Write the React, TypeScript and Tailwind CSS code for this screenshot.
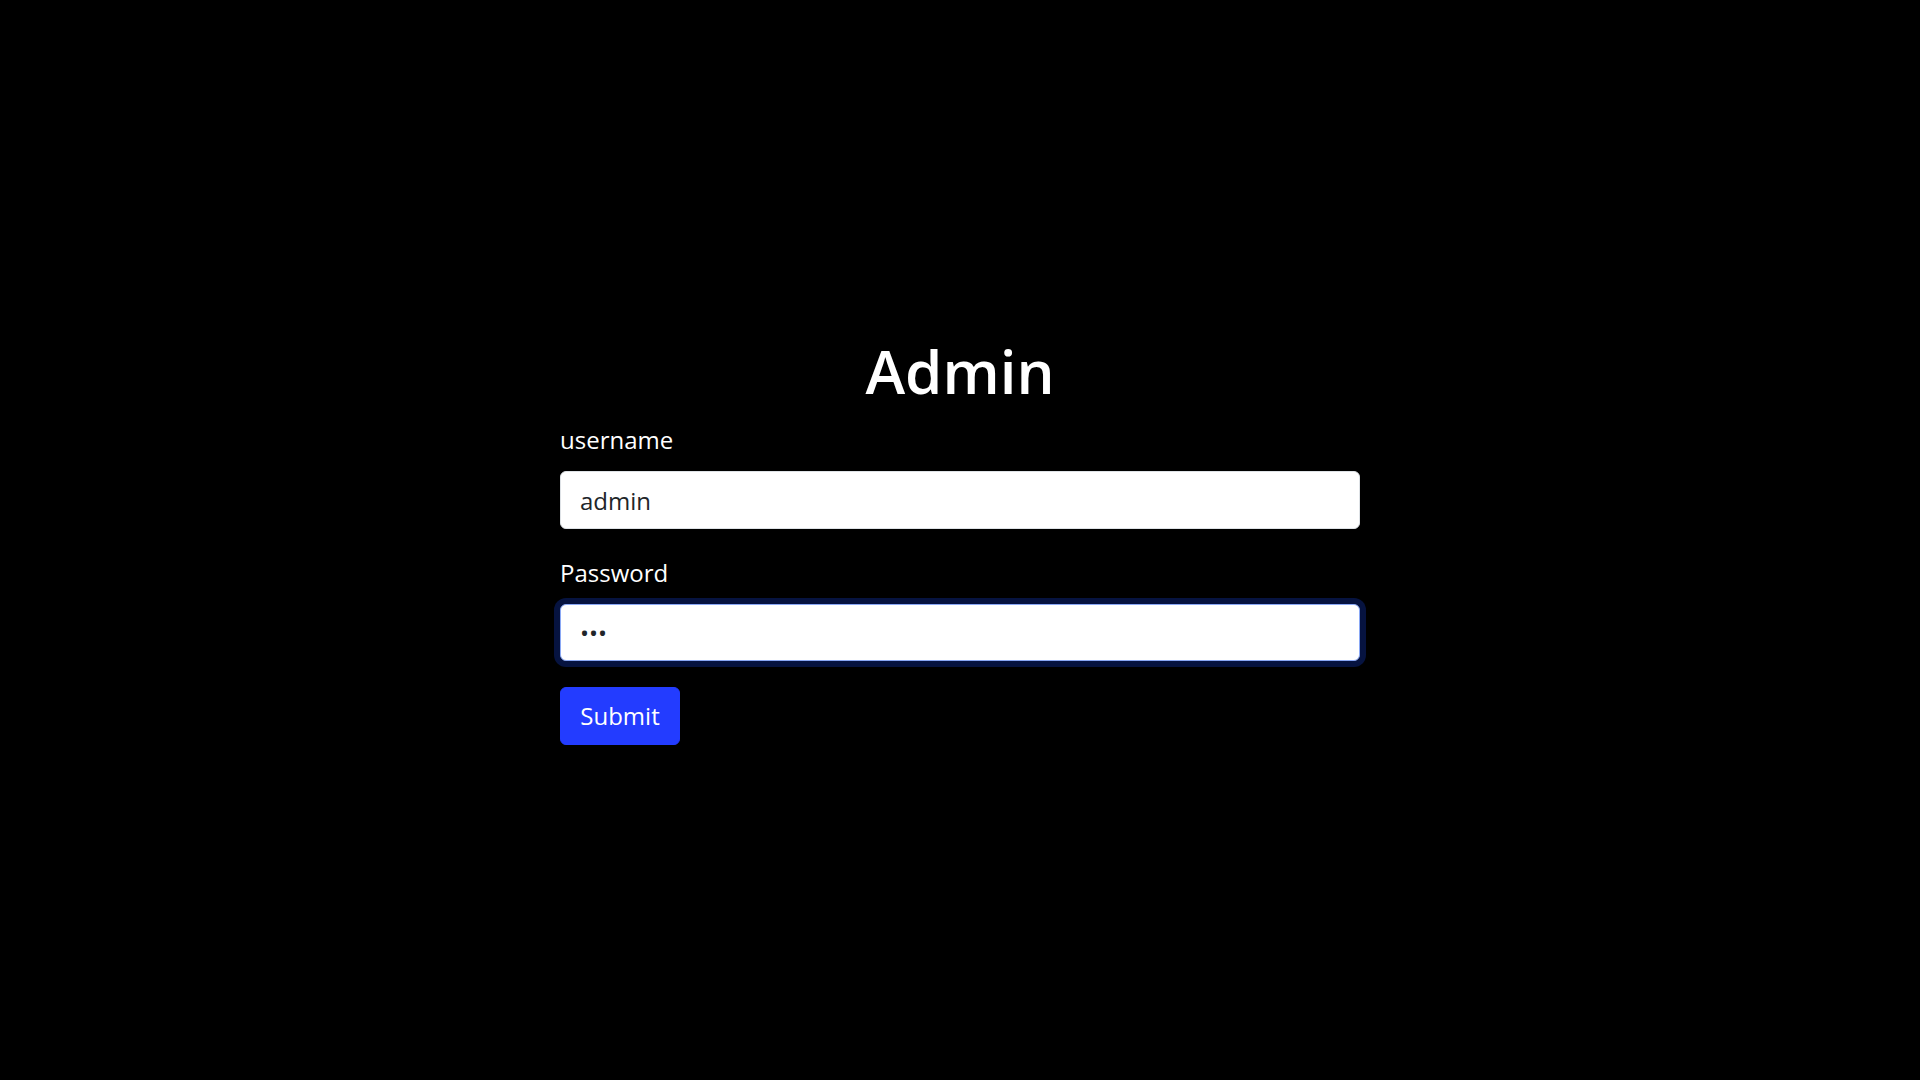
import { useState } from "react";

export default function App() {
  const [username, setUsername] = useState("admin");
  const [password, setPassword] = useState("abc");

  return (
    <main className="flex min-h-screen items-center justify-center bg-black font-['Open_Sans',sans-serif] text-white">
      <form className="flex w-[800px] flex-col" onSubmit={(e) => e.preventDefault()}>
        <h1 className="mb-[15px] text-center text-[60px] font-semibold leading-[72px]">Admin</h1>

        <label htmlFor="username" className="mb-[13px] text-[24px] leading-[36px]">
          username
        </label>
        <input
          id="username"
          value={username}
          onChange={(e) => setUsername(e.target.value)}
          className="h-[58px] w-full rounded-[6px] border border-[#dee2e6] bg-white px-[19px] text-[24px] text-[#212529] outline-none"
        />

        <label htmlFor="password" className="mb-[13px] mt-[26px] text-[24px] leading-[36px]">
          Password
        </label>
        <input
          id="password"
          type="password"
          value={password}
          onChange={(e) => setPassword(e.target.value)}
          className="h-[57px] w-full rounded-[6px] border border-[#8aa8f5] bg-white px-[19px] text-[24px] text-[#212529] shadow-[0_0_0_6px_#061340] outline-none"
        />

        <div className="mt-[26px]">
          <button
            type="submit"
            className="h-[58px] w-[120px] rounded-[6px] border border-[#233cff] bg-[#233cff] text-[24px] text-white"
          >
            Submit
          </button>
        </div>
      </form>
    </main>
  );
}
